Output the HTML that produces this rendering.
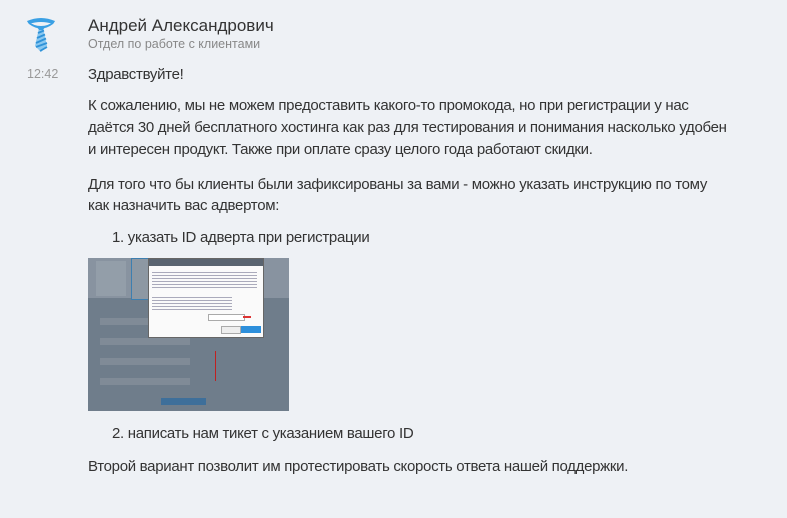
<!DOCTYPE html>
<html><head><meta charset="utf-8"><style>
body{margin:0;width:787px;height:518px;background:#eef1f5;font-family:"Liberation Sans",sans-serif;color:#333;position:relative;overflow:hidden}
.a{position:absolute;white-space:nowrap}
.t{font-size:15px;letter-spacing:-0.3px}
</style></head><body>
<svg class="a" style="left:26px;top:16px" width="30" height="36" viewBox="0 0 30 36">
<path d="M1 5 Q15 -1 29 5 L27 8 Q15 4 3 8 Z" fill="#3aa0e4"/>
<path d="M1 5 Q15 15 29 5 L27 8 Q15 17 3 8 Z" fill="#3aa0e4"/>
<path d="M11 11 L19 11 L17 14 L13 14 Z" fill="#3aa0e4"/>
<path d="M12.5 14 L17.5 14 L21 30 L15 36 L9 30 Z" fill="#8ac8f0"/>
<path d="M12 17 L18 14.5 M11 22 L19 18.5 M10 27 L20 22.5 M10 31 L21 27 M14 35 L21 31" stroke="#2f92d8" stroke-width="1.8"/>
</svg>
<div class="a" style="left:88px;top:16px;font-size:17px;color:#333">Андрей Александрович</div>
<div class="a" style="left:88px;top:37px;font-size:12.5px;color:#888">Отдел по работе с клиентами</div>
<div class="a" style="left:27px;top:67px;font-size:12.5px;color:#999">12:42</div>
<div class="a t" style="left:88px;top:66px">Здравствуйте!</div>
<div class="a t" style="left:88px;top:97px">К сожалению, мы не можем предоставить какого-то промокода, но при регистрации у нас</div>
<div class="a t" style="left:88px;top:119px">даётся 30 дней бесплатного хостинга как раз для тестирования и понимания насколько удобен</div>
<div class="a t" style="left:88px;top:141px">и интересен продукт. Также при оплате сразу целого года работают скидки.</div>
<div class="a t" style="left:88px;top:176px">Для того что бы клиенты были зафиксированы за вами - можно указать инструкцию по тому</div>
<div class="a t" style="left:88px;top:197px">как назначить вас адвертом:</div>
<div class="a t" style="left:112px;top:229px">1. указать ID адверта при регистрации</div>
<div class="a" style="left:88px;top:258px;width:201px;height:153px;background:#6f7d8b;overflow:hidden">
 <div class="a" style="left:0;top:0;width:201px;height:40px;background:#8893a0"></div>
 <div class="a" style="left:8px;top:3px;width:30px;height:35px;background:#939ea9"></div>
 <div class="a" style="left:43px;top:0;width:22px;height:40px;background:#8d98a3;border:1px solid #3d7fb0"></div>
 <div class="a" style="left:12px;top:60px;width:90px;height:7px;background:#808b97"></div>
 <div class="a" style="left:12px;top:80px;width:90px;height:7px;background:#808b97"></div>
 <div class="a" style="left:12px;top:100px;width:90px;height:7px;background:#808b97"></div>
 <div class="a" style="left:12px;top:120px;width:90px;height:7px;background:#808b97"></div>
 <div class="a" style="left:73px;top:140px;width:45px;height:7px;background:#3e6f9a"></div>
 <div class="a" style="left:127px;top:93px;width:1px;height:30px;background:#c02020"></div>
 <div class="a" style="left:60px;top:0;width:114px;height:78px;background:#fafafa;border:1px solid #666"></div>
 <div class="a" style="left:61px;top:1px;width:114px;height:7px;background:#5a6470"></div>
 <div class="a" style="left:64px;top:12px;width:105px;height:20px;background:repeating-linear-gradient(#fafafa 0 2px,#aab 2px 3px)"></div>
 <div class="a" style="left:64px;top:37px;width:80px;height:15px;background:repeating-linear-gradient(#fafafa 0 2px,#aab 2px 3px)"></div>
 <div class="a" style="left:120px;top:56px;width:35px;height:5px;border:1px solid #aaa;background:#fff"></div>
 <div class="a" style="left:155px;top:58px;width:8px;height:2px;background:#d33"></div>
 <div class="a" style="left:133px;top:68px;width:18px;height:6px;background:#eee;border:1px solid #aaa"></div>
 <div class="a" style="left:153px;top:68px;width:20px;height:7px;background:#2d8fdb"></div>
</div>
<div class="a t" style="left:112px;top:425px">2. написать нам тикет с указанием вашего ID</div>
<div class="a t" style="left:88px;top:458px">Второй вариант позволит им протестировать скорость ответа нашей поддержки.</div>
</body></html>
